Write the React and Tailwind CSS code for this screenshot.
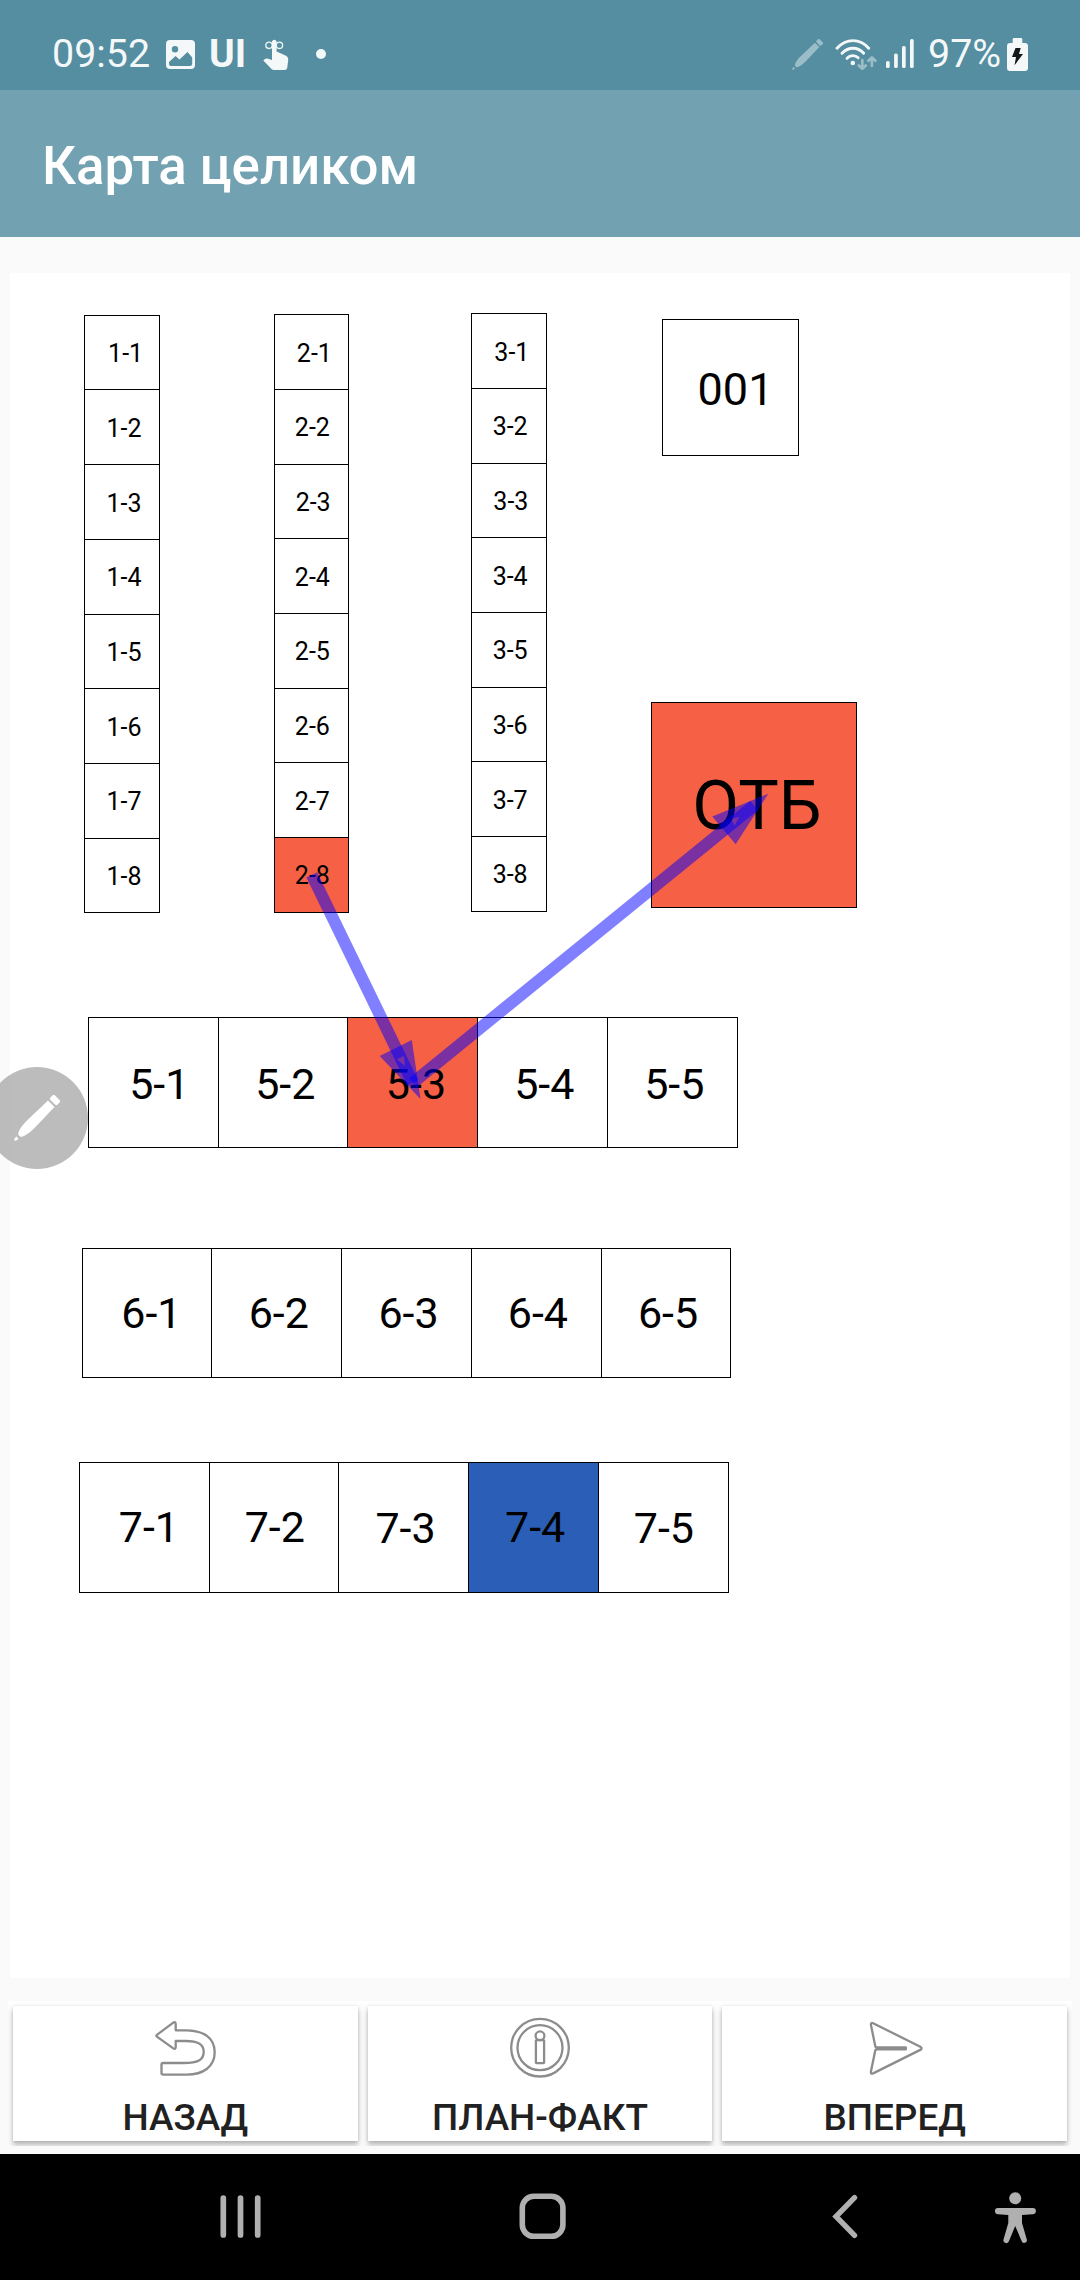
import React from "react";

const ORANGE = "bg-[#f66044]";
const BLUE = "bg-[#2b5fb7]";

// left/top are measured on the map canvas; shift is the [x, y] offset of a label from its cell centre
const groups = [
  {
    id: "1",
    left: 74.2,
    top: 41.8,
    vertical: true,
    cell: "w-[75.7px] h-[75.7px] text-[25px]",
    labels: ["1-1", "1-2", "1-3", "1-4", "1-5", "1-6", "1-7", "1-8"],
    shift: [[3.6, 1], [2, 1.3], [2, 1], [2, 1], [2, 1.3], [2, 1], [2, 1], [2, 1.3]],
  },
  {
    id: "2",
    left: 263.5,
    top: 41.2,
    vertical: true,
    cell: "w-[75.7px] h-[75.7px] text-[25px]",
    labels: ["2-1", "2-2", "2-3", "2-4", "2-5", "2-6", "2-7", "2-8"],
    shift: [[3, 1], [1, 1], [1.8, 1], [1, 1], [1, 1], [1, 1], [1, 1], [1, 1]],
    fill: { "2-8": ORANGE },
  },
  {
    id: "3",
    left: 461,
    top: 40.2,
    vertical: true,
    cell: "w-[75.7px] h-[75.7px] text-[25px]",
    labels: ["3-1", "3-2", "3-3", "3-4", "3-5", "3-6", "3-7", "3-8"],
    shift: [[3, 1], [1.3, 1], [2, 1], [1.3, 1], [1.3, 1], [1.3, 1], [1.3, 1], [1.3, 1]],
  },
  { id: "001", left: 652, top: 46.4, cell: "w-[137px] h-[137px] text-[45px]", labels: ["001"], shift: [[5, 2]] },
  {
    id: "otb",
    left: 641,
    top: 429.4,
    cell: "w-[206px] h-[206px] text-[68px]",
    labels: ["ОТБ"],
    shift: [[3, 0.5]],
    fill: { "ОТБ": ORANGE },
  },
  {
    id: "5",
    left: 77.9,
    top: 744.4,
    cell: "w-[130.75px] h-[130.75px] text-[43px]",
    labels: ["5-1", "5-2", "5-3", "5-4", "5-5"],
    shift: [[6, 2], [2.3, 2], [3.2, 2], [1.8, 2], [2, 2]],
    fill: { "5-3": ORANGE },
  },
  {
    id: "6",
    left: 71.7,
    top: 974.5,
    cell: "w-[130.75px] h-[130.75px] text-[43px]",
    labels: ["6-1", "6-2", "6-3", "6-4", "6-5"],
    shift: [[4.3, 1.3], [2, 1.3], [2, 1.3], [1.6, 1.3], [2, 1.3]],
  },
  {
    id: "7",
    left: 68.9,
    top: 1188.8,
    cell: "w-[130.75px] h-[130.75px] text-[43px]",
    labels: ["7-1", "7-2", "7-3", "7-4", "7-5"],
    shift: [[4.6, 0], [0.8, 0], [1.8, 1], [1.6, 0], [0.6, 1]],
    fill: { "7-4": BLUE },
  },
];

function CellGroup({ group }) {
  const overlap = group.vertical ? "-mt-px first:mt-0" : "-ml-px first:ml-0";
  return (
    <div
      className={`absolute flex ${group.vertical ? "flex-col" : "flex-row"}`}
      style={{ left: group.left, top: group.top }}
    >
      {group.labels.map((label, i) => (
        <div
          key={label}
          className={`flex shrink-0 items-center justify-center border border-black leading-none text-black ${group.cell} ${overlap} ${(group.fill && group.fill[label]) || ""}`}
        >
          <span style={{ transform: `translate(${group.shift[i][0]}px, ${group.shift[i][1]}px)` }}>{label}</span>
        </div>
      ))}
    </div>
  );
}

function Routes() {
  return (
    <svg className="absolute inset-0 h-full w-full" viewBox="10 273 1060 1705" fill="#0000ff" fillOpacity="0.5">
      <g stroke="#0000ff" strokeOpacity="0.5" strokeWidth="12">
        <path d="M311.8 874.8L412.8 1082.8" />
        <path d="M412.8 1082.8L754.1 805.5" />
      </g>
      <path fillRule="evenodd" d="M379.7 1056L411.8 1040L420.5 1099ZM397 1059.3L404 1056L405 1066Z" />
      <path fillRule="evenodd" d="M712.3 816.5L768.3 793.7L735.7 844.3ZM731 819L739.5 816.8L734.7 825.5Z" />
    </svg>
  );
}

function PenShape({ className }) {
  return (
    <svg className={className} viewBox="0 0 46 46" fill="currentColor">
      <rect x="-5" y="-3.2" width="10" height="6.4" rx="1.8" transform="translate(41 5) rotate(45)" />
      <path d="M34 5.5L40.5 12L21 32.5C16 37.5 11 41 8 41.8C6 42.3 3.8 40 4.3 38C5.5 34 9 29 14 24.5Z" />
      <path d="M2.6 41.6L4.4 43.4C3.6 45 1.6 46 0.6 45.6C-0.4 45 1 42.6 2.6 41.6Z" />
    </svg>
  );
}

function StatusBar() {
  return (
    <div className="flex h-[90px] items-center bg-[#548ea0] pt-[18px] pr-[52px] pl-[52px] text-[39.4px] leading-none text-[#f4f8f9]">
      <span className="w-[114px]">09:52</span>
      <svg className="h-[29px] w-[29px]" viewBox="0 0 29 29">
        <path
          fill="currentColor"
          fillRule="evenodd"
          d="M4 0H25Q29 0 29 4V25Q29 29 25 29H4Q0 29 0 25V4Q0 0 4 0ZM9 6A3.2 3.2 0 1 0 9 12.4A3.2 3.2 0 1 0 9 6ZM3 24Q3 26 5 26H24Q26.2 26 26.2 24V17.5L21.5 12L13.5 19.5L9.5 16L3 22Z"
        />
      </svg>
      <span className="ml-[14px] w-[39px] text-[39px] font-bold">UI</span>
      <svg className="ml-[15px] h-[31px] w-[26px]" viewBox="0 0 26 31" fill="currentColor">
        <path d="M9 2.5A2.4 2.4 0 0 1 13.6 2.5V12.5L22.5 16.5Q25.5 18 25.2 21L24.3 28.5Q24 31 21.5 31H11Q9.5 31 8.5 30L0.3 21.5L2 20Q3 19.3 4.3 19.6L9 21Z" />
        <g fill="none" stroke="currentColor" strokeWidth="1.3">
          <circle cx="6" cy="6.3" r="3.2" />
          <circle cx="16.4" cy="6.3" r="3.2" />
        </g>
      </svg>
      <span className="ml-[27px] h-[10px] w-[10px] rounded-full bg-[#f4f8f9]" />
      <span className="grow" />
      <PenShape className="h-[31px] w-[31px] shrink-0 text-[#9bbdc8]" />
      <svg className="ml-[12px] h-[33px] w-[42px] shrink-0" viewBox="835 37 42 33" fill="none" strokeLinecap="round">
        <g stroke="#f4f8f9" strokeWidth="2.9">
          <path d="M837 47.2Q844 39.6 853 39.6Q862 39.6 868.7 47.2" />
          <path d="M842 52.2Q847 47.2 853 47.2Q859 47.2 863.7 52.2" />
          <path d="M847 57.4Q849.5 54.6 853 54.6Q856 54.6 858.2 56.7" />
        </g>
        <circle cx="852.8" cy="62" r="2.3" fill="#f4f8f9" />
        <g stroke="#9bbdc8" strokeWidth="2.7" strokeLinejoin="round">
          <path d="M862.3 59V67.5M858.8 64.4L862.3 67.7L865.8 64.4" />
          <path d="M871.9 65V56.5M868.4 59.8L871.9 56.4L875.4 59.8" />
        </g>
      </svg>
      <svg className="ml-[9px] h-[30px] w-[28px] shrink-0" viewBox="886 39 28 30" fill="currentColor">
        <rect x="886" y="61" width="3.7" height="7" rx="1.6" />
        <rect x="894.1" y="53.5" width="3.7" height="14.5" rx="1.6" />
        <rect x="902" y="46" width="3.7" height="22" rx="1.6" />
        <rect x="910" y="39" width="3.7" height="29" rx="1.6" />
      </svg>
      <span className="mr-px ml-[14px] w-[78px]">97%</span>
      <svg className="h-[33px] w-[21px] shrink-0" viewBox="0 0 21 33">
        <path fill="currentColor" d="M7 0H14Q15.3 0 15.3 1.3V5H18Q21 5 21 8V30Q21 33 18 33H3Q0 33 0 30V8Q0 5 3 5H5.7V1.3Q5.7 0 7 0Z" />
        <path fill="#16191a" d="M8.5 10H13.7L12 16H16L7.5 27.3L9 19H5Z" />
      </svg>
    </div>
  );
}

function BackIcon() {
  return (
    <svg className="h-[64px] w-[64px]" viewBox="153.3 2016 64 64" fill="none" stroke="#8c8c8c" strokeWidth="2.3" strokeLinejoin="round">
      <path d="M157.2 2034.8L173.6 2022.6Q175.8 2021.4 176 2024V2030.3H186C204 2030.3 215 2038 215 2052.3C215 2067 203 2074.6 187 2074.6H163.5Q161.8 2074.6 161.8 2073V2064.5Q161.8 2063 163.5 2063H184C198 2063 204 2060 204 2052C204 2044 198 2041 186 2041H176V2047Q175.8 2049.8 173.6 2048.4L157.2 2036.6Q156.2 2035.7 157.2 2034.8Z" />
    </svg>
  );
}

function InfoIcon() {
  return (
    <svg className="h-[64px] w-[64px]" viewBox="508 2016 64 64" fill="none" stroke="#8c8c8c" strokeWidth="2.3">
      <circle cx="540" cy="2047.7" r="28.8" />
      <circle cx="540" cy="2047.7" r="22.5" />
      <circle cx="540" cy="2035.8" r="4.4" />
      <rect x="535.9" y="2040.2" width="8.2" height="23" rx="0.6" />
    </svg>
  );
}

function SendIcon() {
  return (
    <svg className="h-[64px] w-[64px]" viewBox="862.7 2016 64 64" fill="none" stroke="#8c8c8c" strokeWidth="2.3" strokeLinejoin="round">
      <path d="M905.5 2047.3H876Q875.2 2047.3 875 2046.3L870.6 2024.8Q870.4 2022.2 872.8 2023.2L920.5 2047Q922 2048.3 920.5 2049.6L872.8 2073.4Q870.4 2074.4 870.6 2071.8L875 2050.3Q875.2 2049.4 876 2049.4H905.5Z" />
    </svg>
  );
}

function ActionButton({ icon, children }) {
  return (
    <button className="flex h-[135px] flex-1 flex-col items-center bg-white pt-[10px] shadow-[0_4px_5px_rgba(0,0,0,0.26),0_0_3px_rgba(0,0,0,0.1)]">
      {icon}
      <span className="mt-[20px] text-[36.9px] leading-[36px] font-medium text-[#212121]">{children}</span>
    </button>
  );
}

function NavigationBar() {
  return (
    <div className="h-[126px] bg-black">
      <svg className="block h-full w-full" viewBox="0 2154 1080 126" fill="none" stroke="#b0b0b0">
        <path strokeWidth="5.7" strokeLinecap="round" d="M223.3 2198V2235M240.5 2198V2235M257.7 2198V2235" />
        <rect x="522.3" y="2196.3" width="40.6" height="40" rx="11.5" strokeWidth="5.6" />
        <path strokeWidth="5.4" strokeLinecap="round" d="M854.5 2197.6L836 2216.5L854.5 2235.3" />
        <g fill="#b0b0b0" stroke="none">
          <circle cx="1015.2" cy="2198.3" r="6" />
          <path d="M998 2208H1032.8A3.1 3.1 0 0 1 1032.8 2214.2L1022 2215V2223L1026.8 2239.5A2.7 2.7 0 0 1 1021.6 2241L1015.2 2226L1009 2241A2.7 2.7 0 0 1 1003.5 2239.5L1008.3 2223V2215L998 2214.2A3.1 3.1 0 0 1 998 2208Z" />
        </g>
      </svg>
    </div>
  );
}

export default function App() {
  return (
    <div className="relative flex h-[2280px] w-[1080px] flex-col overflow-hidden bg-[#fafafa] font-[Roboto,sans-serif]">
      <StatusBar />
      <header className="flex h-[147px] items-center bg-[#72a1b1] pt-[5px] pl-[42px]">
        <h1 className="text-[52.8px] leading-none font-medium text-white">Карта целиком</h1>
      </header>
      <main className="relative mx-[10px] mt-[36px] h-[1705px] bg-white">
        {groups.map((group) => (
          <CellGroup key={group.id} group={group} />
        ))}
        <Routes />
      </main>
      <div className="mx-[8px] mt-[23px] flex h-[145px] gap-[10px] overflow-hidden bg-linear-to-b from-white to-[#fafafa] to-[12px] px-[5px] pt-[5px]">
        <ActionButton icon={<BackIcon />}>НАЗАД</ActionButton>
        <ActionButton icon={<InfoIcon />}>ПЛАН-ФАКТ</ActionButton>
        <ActionButton icon={<SendIcon />}>ВПЕРЕД</ActionButton>
      </div>
      <div className="h-[8px]" />
      <NavigationBar />
      <div className="absolute top-[1067px] -left-[14px] flex h-[102px] w-[102px] items-center justify-center rounded-full bg-[#9c9c9c]/68">
        <PenShape className="h-[46px] w-[46px] text-white" />
      </div>
    </div>
  );
}
